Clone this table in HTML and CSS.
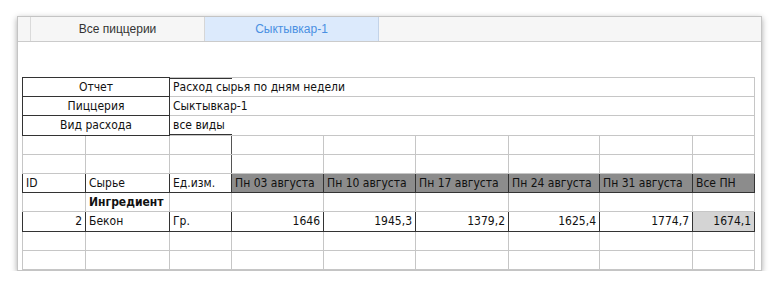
FILE: index.html
```html
<!DOCTYPE html>
<html lang="ru">
<head>
    <meta charset="UTF-8">
    <meta name="viewport" content="width=device-width, initial-scale=1.0">
    <title>Расход сырья</title>
    <link rel="stylesheet" href="styles.css">
</head>
<body>

<div class="window">
    <div class="tabs">
        <div class="tab-edge"></div>
        <div class="tab">Все пиццерии</div>
        <div class="tab active">Сыктывкар-1</div>
        <div class="tab-rest"></div>
    </div>

    <div class="sheet">
        <table class="grid">
            <colgroup>
                <col style="width:63px">
                <col style="width:84px">
                <col style="width:62px">
                <col style="width:92px">
                <col style="width:92px">
                <col style="width:93px">
                <col style="width:91px">
                <col style="width:93px">
                <col style="width:62px">
            </colgroup>
            <tr>
                <td colspan="2" class="label">Отчет</td>
                <td colspan="7" class="value first">Расход сырья по дням недели</td>
            </tr>
            <tr>
                <td colspan="2" class="label">Пиццерия</td>
                <td colspan="7" class="value">Сыктывкар-1</td>
            </tr>
            <tr>
                <td colspan="2" class="label">Вид расхода</td>
                <td colspan="7" class="value last">все виды</td>
            </tr>
            <tr class="blank">
                <td></td><td></td><td class="edge"></td><td></td><td></td><td></td><td></td><td></td><td></td>
            </tr>
            <tr class="blank">
                <td></td><td></td><td class="edge"></td><td></td><td></td><td></td><td></td><td></td><td></td>
            </tr>
            <tr class="head">
                <td>ID</td>
                <td>Сырье</td>
                <td>Ед.изм.</td>
                <td class="day">Пн 03 августа</td>
                <td class="day">Пн 10 августа</td>
                <td class="day">Пн 17 августа</td>
                <td class="day">Пн 24 августа</td>
                <td class="day">Пн 31 августа</td>
                <td class="day">Все ПН</td>
            </tr>
            <tr>
                <td></td>
                <td class="group">Ингредиент</td>
                <td></td><td></td><td></td><td></td><td></td><td></td><td></td>
            </tr>
            <tr class="item">
                <td class="num">2</td>
                <td>Бекон</td>
                <td>Гр.</td>
                <td class="num">1646</td>
                <td class="num">1945,3</td>
                <td class="num">1379,2</td>
                <td class="num">1625,4</td>
                <td class="num">1774,7</td>
                <td class="num total">1674,1</td>
            </tr>
            <tr>
                <td></td><td></td><td></td><td></td><td></td><td></td><td></td><td></td><td></td>
            </tr>
            <tr>
                <td></td><td></td><td></td><td></td><td></td><td></td><td></td><td></td><td></td>
            </tr>
        </table>
    </div>
</div>

</body>
</html>
```

FILE: styles.css
```css
body {
    margin: 0;
    background: #fff;
    font-family: "Liberation Sans", Arial, sans-serif;
}
.window {
    position: relative;
    margin: 16px 0 0 17px;
    width: 743px;
    height: 253px;
    background: #fff;
    border: 1px solid #c4c4c4;
    box-shadow: 0 2px 6px rgba(0, 0, 0, 0.35);
}
.tabs {
    display: flex;
    height: 24px;
    background: #f6f6f6;
    border-bottom: 1px solid #cbcbcb;
}
.tab-edge {
    width: 12px;
    border-right: 1px solid #dadada;
}
.tab {
    width: 173px;
    border-right: 1px solid #d6d6d6;
    display: flex;
    align-items: center;
    justify-content: center;
    font-size: 12px;
    color: #333;
}
.tab.active {
    background: #dceafc;
    color: #4a90e2;
    border-right-color: #c3d3e8;
}
.tab-rest {
    flex: 1;
}
.sheet {
    padding: 35px 0 0 4px;
}
.grid {
    border-collapse: collapse;
    table-layout: fixed;
    width: 733px;
    font-family: "DejaVu Sans Condensed", "DejaVu Sans", sans-serif;
    font-size: 12px;
    color: #111;
}
.grid tr {
    height: 19.2px;
}
.grid td {
    padding: 0 3px;
    border: 1px solid #c6c6c6;
    white-space: nowrap;
    overflow: hidden;
    line-height: 17px;
}
.grid td.label {
    text-align: center;
    border: 1px solid #333;
}
.grid td.value {
    border-left: 1px solid #333;
}
.grid td.value.first {
    background: linear-gradient(#333, #333) no-repeat 0 0 / 62px 1px;
}
.grid td.value.last {
    background: linear-gradient(#333, #333) no-repeat 0 100% / 62px 1px;
}
.grid td.edge {
    border-right-color: #555;
}
.grid tr.head td,
.grid tr.item td {
    border: 1px solid #333;
}
.grid td.day {
    background: #8c8c8c;
}
.grid td.group {
    font-weight: bold;
}
.grid td.num {
    text-align: right;
}
.grid td.total {
    background: #d4d4d4;
}
```
